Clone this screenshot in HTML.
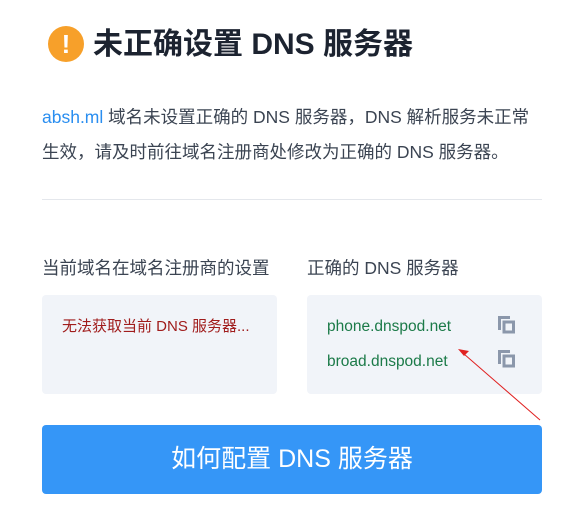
<!DOCTYPE html>
<html><head><meta charset="utf-8"><style>
body{margin:0;width:572px;height:506px;background:#fff;font-family:"Liberation Sans","Noto Sans CJK SC",sans-serif;position:relative;overflow:hidden;color:#1f2633}
.a{position:absolute;white-space:nowrap}
</style></head><body>
<div class="a" style="left:48px;top:26px;width:36px;height:36px;border-radius:50%;background:#f7a02a;color:#fff;font-size:26px;font-weight:bold;text-align:center;line-height:36px">!</div>
<div class="a" style="left:93px;top:24px;font-size:30px;font-weight:bold;line-height:42px;color:#1c2330">未正确设置 DNS 服务器</div>
<div class="a" style="left:42px;top:100px;font-size:17.5px;line-height:35px;color:#3b4452"><span style="color:#2a8ef0">absh.ml</span> 域名未设置正确的 DNS 服务器，DNS 解析服务未正常<br>生效，请及时前往域名注册商处修改为正确的 DNS 服务器。</div>
<div class="a" style="left:42px;top:199px;width:500px;height:1px;background:#e4e7ec"></div>
<div class="a" style="left:42px;top:257px;font-size:17.5px;color:#3b4452;line-height:22px">当前域名在域名注册商的设置</div>
<div class="a" style="left:307px;top:257px;font-size:17.5px;color:#3b4452;line-height:22px">正确的 DNS 服务器</div>
<div class="a" style="left:42px;top:295px;width:235px;height:99px;background:#f1f4f9;border-radius:4px"></div>
<div class="a" style="left:62px;top:317px;font-size:15px;color:#a01c1c;line-height:20px">无法获取当前 DNS 服务器...</div>
<div class="a" style="left:307px;top:295px;width:235px;height:99px;background:#f1f4f9;border-radius:4px"></div>
<div class="a" style="left:327px;top:317px;font-size:15.5px;color:#1b7a48;line-height:20px">phone.dnspod.net</div>
<div class="a" style="left:327px;top:352px;font-size:15.5px;color:#1b7a48;line-height:20px">broad.dnspod.net</div>
<svg class="a" style="left:497px;top:315px" width="20" height="20" viewBox="0 0 20 20"><path d="M1 1h12v3H4v11H1z" fill="#8b97ab"/><rect x="7" y="7" width="9.5" height="10" fill="none" stroke="#8b97ab" stroke-width="3"/></svg>
<svg class="a" style="left:497px;top:349px" width="20" height="20" viewBox="0 0 20 20"><path d="M1 1h12v3H4v11H1z" fill="#8b97ab"/><rect x="7" y="7" width="9.5" height="10" fill="none" stroke="#8b97ab" stroke-width="3"/></svg>
<svg class="a" style="left:0;top:0" width="572" height="506"><line x1="540" y1="420" x2="464" y2="354" stroke="#e02020" stroke-width="1"/><path d="M458 349l11 2-5 5z" fill="#e02020"/></svg>
<div class="a" style="left:42px;top:425px;width:500px;height:69px;background:#3596f7;border-radius:4px;color:#fff;font-size:25px;text-align:center;line-height:69px">如何配置 DNS 服务器</div>
</body></html>
